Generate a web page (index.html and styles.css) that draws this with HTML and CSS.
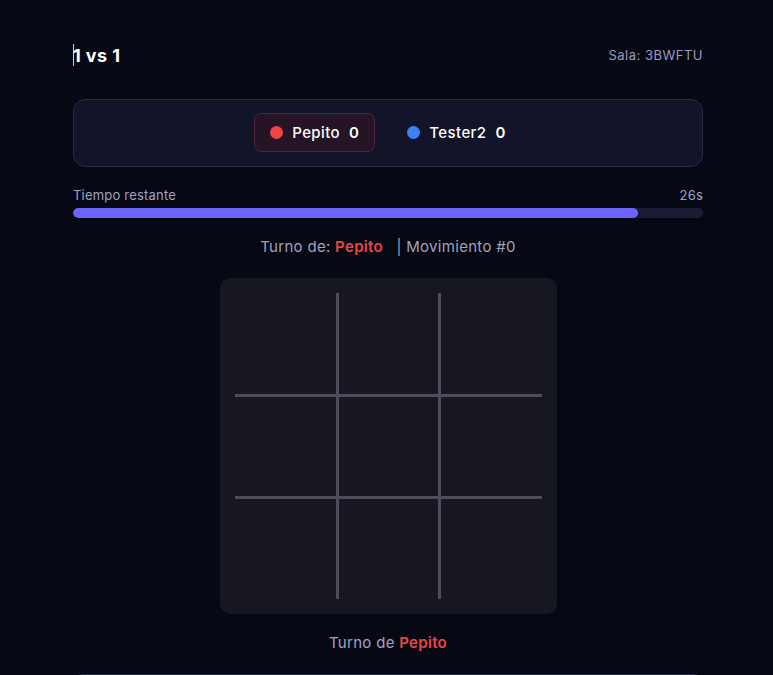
FILE: index.html
```html
<!DOCTYPE html>
<html lang="es">
<head>
    <meta charset="UTF-8">
    <meta name="viewport" content="width=device-width, initial-scale=1.0">
    <title>Tres en raya - 1 vs 1</title>
    <link rel="stylesheet" href="styles.css">
</head>
<body>
    <div class="page">
        <!-- Cabecera -->
        <div class="header">
            <h1 class="title"><span class="caret"></span>1 vs 1</h1>
            <span class="room">Sala: 3BWFTU</span>
        </div>

        <!-- Marcador -->
        <div class="scoreboard">
            <div class="player active">
                <span class="dot red"></span>
                <span class="name">Pepito</span>
                <span class="score">0</span>
            </div>
            <div class="player">
                <span class="dot blue"></span>
                <span class="name">Tester2</span>
                <span class="score">0</span>
            </div>
        </div>

        <!-- Tiempo -->
        <div class="timer">
            <div class="timer-labels">
                <span>Tiempo restante</span>
                <span>26s</span>
            </div>
            <div class="timer-bar">
                <div class="timer-fill" style="width: 89.7%"></div>
            </div>
        </div>

        <p class="turn-info">Turno de: <strong class="red-text">Pepito</strong> <span class="moves">| Movimiento #0</span></p>

        <!-- Tablero -->
        <div class="board">
            <div class="grid">
                <div class="cell"></div>
                <div class="cell"></div>
                <div class="cell"></div>
                <div class="cell"></div>
                <div class="cell"></div>
                <div class="cell"></div>
                <div class="cell"></div>
                <div class="cell"></div>
                <div class="cell"></div>
            </div>
        </div>

        <p class="turn-bottom">Turno de <strong class="red-text">Pepito</strong></p>

        <div class="next-card"></div>
    </div>
</body>
</html>
```
FILE: styles.css
```css
body {
    margin: 0;
    padding: 0 0 0 3px;
    background-color: #060814;
    color: #ffffff;
    font-family: Inter, "Noto Sans", sans-serif;
    overflow: hidden;
}

.page {
    max-width: 630px;
    margin: 0 auto;
    padding-top: 44px;
}

.header {
    display: flex;
    justify-content: space-between;
    align-items: center;
    height: 22px;
    margin-bottom: 33px;
}

.title {
    margin: 0;
    font-size: 18px;
    font-weight: 700;
    letter-spacing: 0.4px;
    display: flex;
    align-items: center;
}

.caret {
    display: inline-block;
    width: 1px;
    height: 22px;
    background-color: #d0d0d8;
    margin-right: -1px;
}

.room {
    font-size: 13px;
    letter-spacing: 0.5px;
    color: #9a9cc0;
}

.scoreboard {
    display: flex;
    justify-content: center;
    gap: 16px;
    padding: 13px 0 14px;
    background-color: #121429;
    border: 1px solid #272a47;
    border-radius: 12px;
}

.player {
    display: flex;
    align-items: center;
    height: 37px;
    padding: 0 15px;
    border: 1px solid transparent;
    border-radius: 7px;
    font-size: 15px;
    font-weight: 500;
    letter-spacing: 0.4px;
}

.player.active {
    background-color: #251426;
    border-color: #512338;
}

.dot {
    width: 13px;
    height: 13px;
    border-radius: 50%;
    margin-right: 9px;
}

.dot.red {
    background-color: #ef4444;
}

.dot.blue {
    background-color: #3b82f6;
}

.score {
    margin-left: 9px;
    font-weight: 600;
}

.timer {
    margin-top: 20px;
}

.timer-labels {
    display: flex;
    justify-content: space-between;
    font-size: 13px;
    line-height: 16px;
    letter-spacing: 0.2px;
    color: #a0a3c4;
    margin-bottom: 5px;
}

.timer-bar {
    height: 10px;
    background-color: #1a1c35;
    border-radius: 5px;
    overflow: hidden;
}

.timer-fill {
    height: 100%;
    background-color: #6c63ff;
    border-radius: 5px;
}

.turn-info {
    margin: 19px 0 0;
    text-align: center;
    font-size: 15px;
    line-height: 20px;
    letter-spacing: 0.3px;
    color: #a0a3b8;
}

.red-text {
    color: #ef4444;
    font-weight: 600;
}

.moves {
    margin-left: 9px;
}

.board {
    width: 337px;
    height: 336px;
    margin: 21px auto 0;
    box-sizing: border-box;
    padding: 15px;
    background-color: #171722;
    border-radius: 10px;
}

.grid {
    display: grid;
    grid-template-columns: 104px 102px 1fr;
    grid-template-rows: 104px 102px 1fr;
    width: 100%;
    height: 100%;
}

.cell {
    border-color: #4c4c5a;
    border-style: solid;
    border-width: 0;
}

.cell:nth-child(3n+1),
.cell:nth-child(3n+2) {
    border-right-width: 3px;
}

.cell:nth-child(-n+6) {
    border-bottom-width: 3px;
}

.turn-bottom {
    margin: 19px 0 0;
    text-align: center;
    font-size: 15px;
    line-height: 20px;
    letter-spacing: 0.3px;
    color: #a0a3c8;
}

.next-card {
    margin-top: 21px;
    height: 60px;
    background-color: #0b0d1c;
    border: 1px solid #2a2d48;
    border-radius: 10px;
}
```
